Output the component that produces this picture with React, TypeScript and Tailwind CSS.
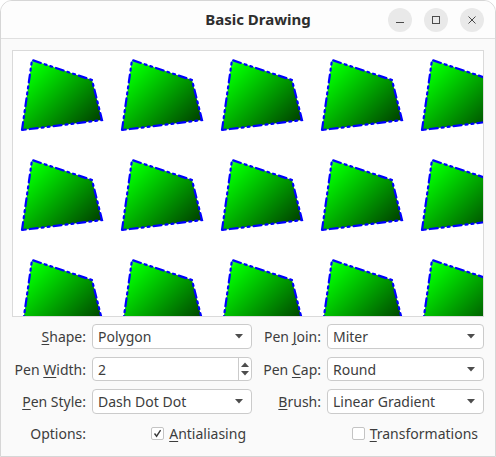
import * as React from "react"

const font = { fontFamily: '"Noto Sans", "Open Sans", sans-serif' }

const tilesX = [0, 100, 200, 300, 400]
const tilesY = [0, 100, 200]

function RenderArea() {
  return (
    <div className="h-[267px] w-[472px] bg-white">
      <svg width="472" height="267" viewBox="0 0 472 267" className="block">
        <defs>
          <linearGradient id="lg" gradientUnits="userSpaceOnUse" x1="0" y1="0" x2="100" y2="100">
            <stop offset="0" stopColor="#ffffff" />
            <stop offset="0.2" stopColor="#00ff00" />
            <stop offset="1" stopColor="#000000" />
          </linearGradient>
          <clipPath id="clip">
            <rect x="0" y="0" width="472" height="267" />
          </clipPath>
        </defs>
        <g clipPath="url(#clip)">
          {tilesY.map(y =>
            tilesX.map(x => (
              <g key={`${x}-${y}`} transform={`translate(${x},${y})`}>
                <polygon
                  points="10,80 20,10 80,30 90,70"
                  fill="url(#lg)"
                  stroke="#0000ff"
                  strokeWidth="2.2"
                  strokeDasharray="8 4 2 4 2 4"
                  strokeLinecap="round"
                  strokeLinejoin="miter"
                />
              </g>
            ))
          )}
        </g>
        {/* frame drawn on top, like the widget does */}
        <rect x="0.5" y="0.5" width="471" height="266" fill="none" stroke="#dadada" />
      </svg>
    </div>
  )
}

function Label({ children }: { children: React.ReactNode }) {
  return <div className="flex items-center justify-end text-[14px] text-[#3d3d3d]">{children}</div>
}

function Combo({ value }: { value: string }) {
  return (
    <div className="flex items-center justify-between rounded-[4px] border border-[#cbcbcb] bg-white pl-[5px] pr-[8px] text-[14px] text-[#3d3d3d]">
      <span>{value}</span>
      <svg width="8" height="5" viewBox="0 0 8 5">
        <path d="M0 0 H8 L4 4.5 Z" fill="#4d4d4d" />
      </svg>
    </div>
  )
}

function SpinBox({ value }: { value: string }) {
  return (
    <div className="flex items-stretch rounded-[4px] border border-[#cbcbcb] bg-white text-[14px] text-[#3d3d3d]">
      <span className="flex flex-1 items-center pl-[5px]">{value}</span>
      <div className="flex w-[13px] flex-col items-center justify-center gap-[4px] border-l border-[#cbcbcb]">
        <svg width="8" height="5" viewBox="0 0 8 5">
          <path d="M0 5 H8 L4 0.5 Z" fill="#4d4d4d" />
        </svg>
        <svg width="8" height="5" viewBox="0 0 8 5">
          <path d="M0 0 H8 L4 4.5 Z" fill="#4d4d4d" />
        </svg>
      </div>
    </div>
  )
}

function CheckBox({ checked, children }: { checked: boolean; children: React.ReactNode }) {
  return (
    <div className="flex items-center gap-[5px] text-[14px] text-[#3d3d3d]">
      <span className="flex h-[13px] w-[13px] items-center justify-center rounded-[2px] border border-[#c4c4c4] bg-white">
        {checked && (
          <svg width="9" height="9" viewBox="0 0 9 9">
            <path d="M1.5 4.5 L3.6 7.2 L7.6 1.2" fill="none" stroke="#3a3a3a" strokeWidth="1.4" />
          </svg>
        )}
      </span>
      <span>{children}</span>
    </div>
  )
}

function CircleButton({ children }: { children: React.ReactNode }) {
  return (
    <div className="flex h-[24px] w-[24px] items-center justify-center rounded-full bg-[#e9e9e9]">{children}</div>
  )
}

export default function App() {
  return (
    <div className="h-[457px] w-[496px] bg-white" style={font}>
      <div className="flex h-full flex-col overflow-hidden rounded-t-[12px] border border-[#d6d6d6] bg-[#fafafa]">
        {/* title bar */}
        <div className="flex h-[38px] shrink-0 items-center border-b border-[#e0e0e0] bg-[#fdfdfd]">
          <div className="flex-1 pl-[127px] text-center text-[15px] font-bold text-[#2e2e2e]">Basic Drawing</div>
          <div className="flex gap-[12px] pr-[11px]">
            <CircleButton>
              <svg width="10" height="10" viewBox="0 0 10 10">
                <path d="M1 7.5 H9" stroke="#4a4a4a" strokeWidth="1" />
              </svg>
            </CircleButton>
            <CircleButton>
              <svg width="10" height="10" viewBox="0 0 10 10">
                <rect x="1.5" y="1.5" width="7" height="7" fill="none" stroke="#4a4a4a" strokeWidth="1" />
              </svg>
            </CircleButton>
            <CircleButton>
              <svg width="10" height="10" viewBox="0 0 10 10">
                <path d="M1.5 1.5 L8.5 8.5 M8.5 1.5 L1.5 8.5" stroke="#4a4a4a" strokeWidth="1" />
              </svg>
            </CircleButton>
          </div>
        </div>

        {/* content */}
        <div className="flex flex-col px-[11px] pt-[11px]">
          <RenderArea />
          <div className="mt-[7px] grid grid-cols-[74px_160px_63px_157px] grid-rows-[25px_24px_25px_22px] gap-x-[6px] gap-y-[8px]">
            <Label>
              <span><u className="underline-offset-2">S</u>hape:</span>
            </Label>
            <Combo value="Polygon" />
            <Label>
              <span>Pen <u className="underline-offset-2">J</u>oin:</span>
            </Label>
            <Combo value="Miter" />

            <Label>
              <span>Pen <u className="underline-offset-2">W</u>idth:</span>
            </Label>
            <SpinBox value="2" />
            <Label>
              <span>Pen <u className="underline-offset-2">C</u>ap:</span>
            </Label>
            <Combo value="Round" />

            <Label>
              <span><u className="underline-offset-2">P</u>en Style:</span>
            </Label>
            <Combo value="Dash Dot Dot" />
            <Label>
              <span><u className="underline-offset-2">B</u>rush:</span>
            </Label>
            <Combo value="Linear Gradient" />

            <Label>
              <span>Options:</span>
            </Label>
            <div className="flex items-center justify-end pr-[6px]">
              <CheckBox checked>
                <u className="underline-offset-2">A</u>ntialiasing
              </CheckBox>
            </div>
            <div className="col-span-2 flex items-center justify-end pr-[6px]">
              <CheckBox checked={false}>
                <u className="underline-offset-2">T</u>ransformations
              </CheckBox>
            </div>
          </div>
        </div>
      </div>
    </div>
  )
}
